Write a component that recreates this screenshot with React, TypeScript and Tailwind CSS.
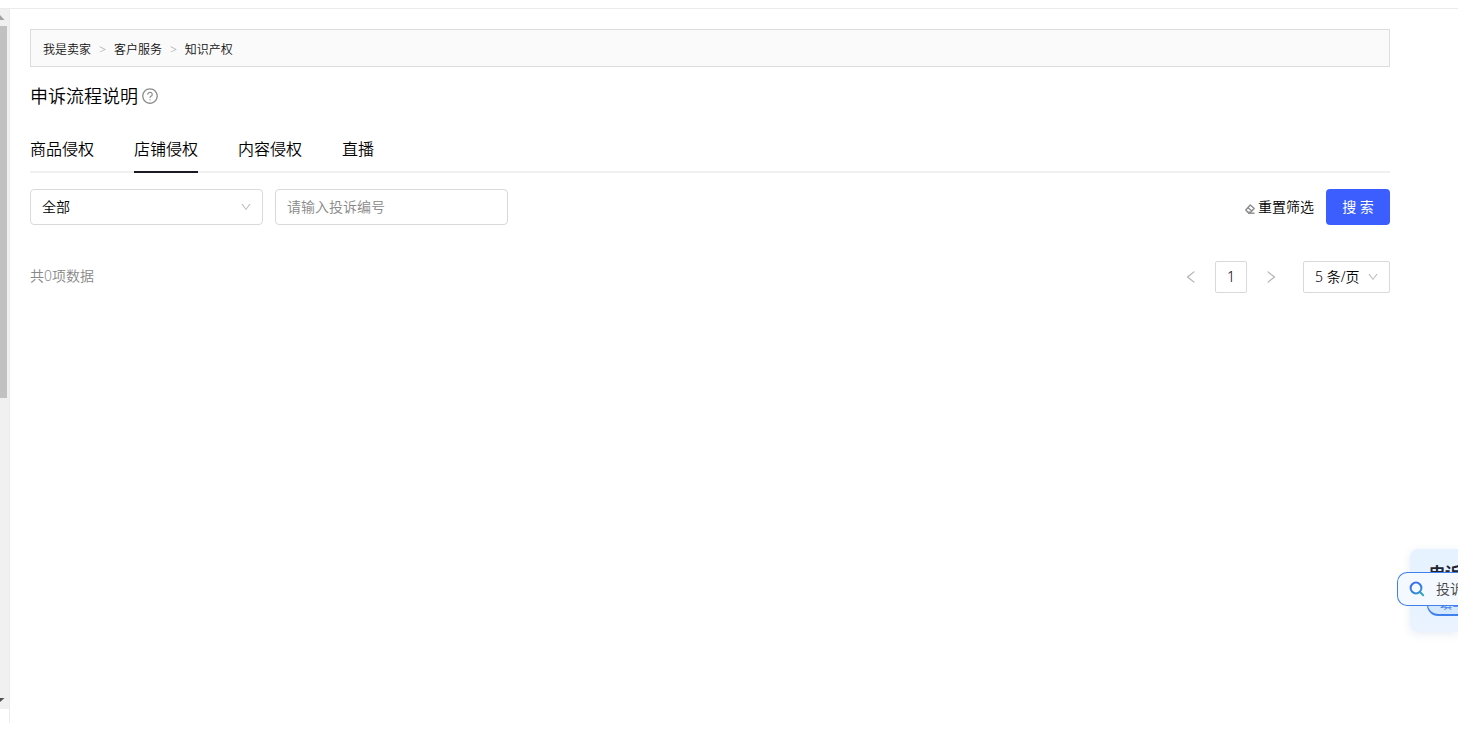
import { useState } from "react";
import {
  AiOutlineDown,
  AiOutlineLeft,
  AiOutlineQuestionCircle,
  AiOutlineRight,
} from "react-icons/ai";

const crumbs = ["我是卖家", "客户服务", "知识产权"];
const tabs = ["商品侵权", "店铺侵权", "内容侵权", "直播"];

function EraserIcon() {
  return (
    <svg width="10" height="10" viewBox="0 0 10 10" fill="none" stroke="#8c8c8c" strokeWidth="1.4" strokeLinejoin="round" aria-hidden="true">
      <path d="M0.8 6 L5.3 1 L9.2 4.6 L5.6 8.3 H2.8 Z" />
      <path d="M3 3.8 L7 7" />
      <path d="M3 9.2 H9.6" />
    </svg>
  );
}

function SearchIcon() {
  return (
    <svg width="16" height="16" viewBox="0 0 16 16" fill="none" strokeWidth="2" strokeLinecap="round" aria-hidden="true">
      <defs>
        <linearGradient id="lens" gradientUnits="userSpaceOnUse" x1="4" y1="2" x2="13" y2="15">
          <stop offset="0" stopColor="#3b6cf6" />
          <stop offset="0.5" stopColor="#3480dc" />
          <stop offset="1" stopColor="#2fb0b8" />
        </linearGradient>
      </defs>
      <circle cx="7" cy="7" r="5.4" stroke="url(#lens)" />
      <path d="M11 11 L14.2 14.2" stroke="url(#lens)" />
    </svg>
  );
}

function Scrollbar() {
  return (
    <div className="flex h-[714px] w-[10px] shrink-0 flex-col border-r border-[#ebebeb]" aria-hidden="true">
      <div className="flex h-[700px] flex-col justify-between bg-[#f0f0f0]">
        <div>
          <svg className="mt-[6px] mb-[6px] block" width="5" height="5" viewBox="0 0 5 5">
            <path d="M0 0 L4.5 5 H0 Z" fill="#a3a3a3" />
          </svg>
          <div className="h-[372px] w-[7px] bg-[#c1c1c1]" />
        </div>
        <svg className="mb-[7px] block" width="5" height="4" viewBox="0 0 5 4">
          <path d="M0 0 H4.5 L0 4 Z" fill="#505050" />
        </svg>
      </div>
    </div>
  );
}

export default function App() {
  const [active, setActive] = useState(1);
  const [caseNo, setCaseNo] = useState("");

  return (
    <div className="relative min-h-screen overflow-hidden bg-white pt-2 font-['Noto_Sans','Noto_Sans_CJK_SC',sans-serif] text-sm font-[350] text-black">
      <div className="flex border-t border-[#ebebeb]">
        <Scrollbar />
        <main className="min-w-0 flex-1 pt-5 pr-[68px] pl-5">
          <nav aria-label="面包屑" className="flex h-[38px] items-center border border-[#dddddd] bg-[#fafafa] px-3 pt-1 text-xs text-[#111111]">
            {crumbs.map((label, i) => (
              <span key={label} className="flex items-center">
                {i > 0 && <span className="px-2 text-xs text-[#aaaaaa]">&gt;</span>}
                <a href="#">{label}</a>
              </span>
            ))}
          </nav>

          <h1 className="mt-[17px] flex h-6 items-center gap-[3px] text-lg leading-6">
            申诉流程说明
            <AiOutlineQuestionCircle className="size-[18px] text-[#8c8c8c]" />
          </h1>

          <div role="tablist" className="mt-[19px] flex h-[46px] gap-10 border-b-2 border-[#f0f0f0]">
            {tabs.map((label, i) => (
              <button
                key={label}
                type="button"
                role="tab"
                aria-selected={i === active}
                onClick={() => setActive(i)}
                className={
                  i === active
                    ? "-mb-[2px] border-b-2 border-[#1a1a24] text-base"
                    : "-mb-[2px] border-b-2 border-transparent text-base"
                }
              >
                {label}
              </button>
            ))}
          </div>

          <form className="mt-4 flex items-center gap-3" onSubmit={(e) => e.preventDefault()}>
            <div className="grid w-[233px] items-center">
              <select aria-label="状态" className="col-start-1 row-start-1 h-9 w-full appearance-none rounded-[4px] border border-[#d9d9d9] bg-white px-[11px] text-sm">
                <option>全部</option>
              </select>
              <AiOutlineDown className="pointer-events-none col-start-1 row-start-1 mr-[11px] size-3 justify-self-end text-[#b8b8b8]" />
            </div>
            <input
              aria-label="投诉编号"
              placeholder="请输入投诉编号"
              value={caseNo}
              onChange={(e) => setCaseNo(e.target.value)}
              className="h-9 w-[233px] rounded-[4px] border border-[#d9d9d9] px-[11px] pb-[2px] text-sm placeholder:text-[#888888]"
            />
            <button type="reset" onClick={() => setCaseNo("")} className="ml-auto flex items-center gap-[3px]">
              <span className="pt-1">
                <EraserIcon />
              </span>
              重置筛选
            </button>
            <button type="submit" className="h-9 w-16 rounded-[4px] bg-[#3c5eff] font-normal text-white">
              搜 索
            </button>
          </form>

          <div className="mt-9 flex h-8 items-center justify-between">
            <p className="pb-[2px] text-[#888888]">共0项数据</p>
            <div className="flex items-center">
              <button type="button" aria-label="上一页" className="flex size-8 items-center justify-center text-[#b8b8b8]">
                <AiOutlineLeft className="size-4" />
              </button>
              <button type="button" className="ml-2 size-8 rounded-[2px] border border-[#d9d9d9]">
                1
              </button>
              <button type="button" aria-label="下一页" className="ml-2 flex size-8 items-center justify-center text-[#b8b8b8]">
                <AiOutlineRight className="size-4" />
              </button>
              <div className="ml-4 grid w-[87px] items-center">
                <select aria-label="每页条数" className="col-start-1 row-start-1 h-8 w-full appearance-none rounded-[2px] border border-[#d9d9d9] bg-white pl-[11px] text-sm">
                  <option>5 条/页</option>
                </select>
                <AiOutlineDown className="pointer-events-none col-start-1 row-start-1 mr-[11px] size-3 justify-self-end text-[#b8b8b8]" />
              </div>
            </div>
          </div>
        </main>
      </div>

      <aside className="absolute top-[549px] right-0 h-[83px] w-12 rounded-l-[8px] bg-linear-to-b from-[#e6f2ff] to-[#eaf3ff] shadow-[0_2px_8px_rgba(60,90,160,0.12)]">
        <div className="h-full overflow-hidden pt-[14px] pl-[17px] whitespace-nowrap">
          <p className="pl-[2px] text-base leading-5 font-bold text-[#1f2430]">申诉</p>
          <a href="#" className="mt-[11px] flex h-[22px] w-24 items-center rounded-full border border-b-2 border-[#3f7fee] bg-[#d3e8ff] pl-3 text-xs font-normal text-[#3f7fee]">
            填写
          </a>
        </div>
      </aside>
      <label className="absolute top-[572px] right-0 flex h-[34px] w-[61px] items-center gap-[11px] overflow-hidden rounded-l-[10px] border border-r-0 border-[#3f7fee] bg-[#f3f9ff] pl-[11px] whitespace-nowrap text-[#444444]">
        <span className="shrink-0">
          <SearchIcon />
        </span>
        <span className="shrink-0">投诉</span>
      </label>
    </div>
  );
}
